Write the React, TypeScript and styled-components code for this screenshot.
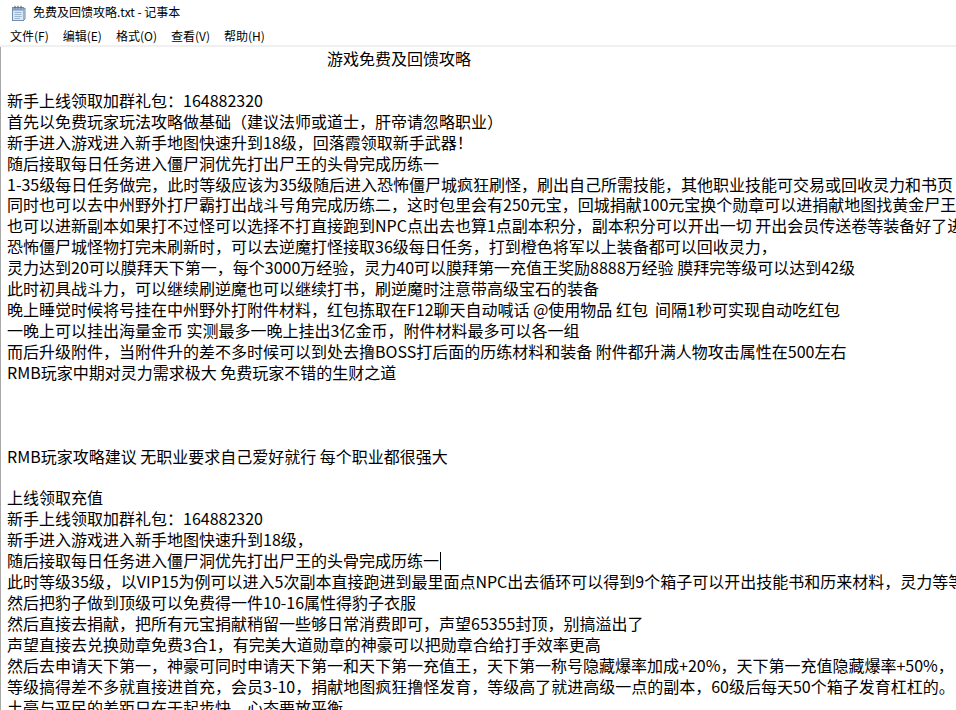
import React from 'react';
import styled, { createGlobalStyle } from 'styled-components';

const GlobalStyle = createGlobalStyle`
  html, body {
    margin: 0;
    padding: 0;
    background: #ffffff;
    overflow: hidden;
  }
  body {
    font-family: "Noto Sans CJK SC", "Noto Sans", sans-serif;
  }
`;

const Window = styled.div`
  width: 956px;
  height: 710px;
  display: flex;
  flex-direction: column;
  background: #ffffff;
  overflow: hidden;
`;

const TitleBar = styled.div`
  height: 25px;
  display: flex;
  align-items: center;
  gap: 7px;
  padding-left: 11px;
  font-size: 12px;
  color: #000;
`;

const TitleText = styled.span`
  line-height: 1;
  margin-top: -1px;
`;

const MenuBar = styled.div`
  height: 20px;
  display: flex;
  align-items: center;
  gap: 14px;
  padding-left: 10px;
  font-size: 12px;
  color: #000;
  border-bottom: 2px solid #f0f0f0;
  margin-bottom: 0;
`;

const MenuItem = styled.span`
  line-height: 1;
  margin-top: 2px;
`;

const Editor = styled.div`
  flex: 1;
  border-left: 1px solid #a8a8a8;
  padding: 1px 0 0 6px;
  overflow: hidden;
  font-size: 16px;
  color: #000;
`;

const Line = styled.div<{ $indent?: number }>`
  height: 20.93px;
  line-height: 20.93px;
  white-space: pre;
  padding-left: ${(p) => p.$indent || 0}px;
`;

const Caret = styled.span`
  display: inline-block;
  width: 1px;
  height: 18px;
  background: #000;
  vertical-align: -3px;
  margin-left: 1px;
`;

const NotepadIcon = () => (
  <svg width="15" height="16" viewBox="0 0 15 16">
    <rect x="1.5" y="2.5" width="11" height="13" fill="#dbe9f6" stroke="#6e8fb3" />
    <rect x="1.5" y="2.5" width="11" height="2.5" fill="#8eb4dc" stroke="#6e8fb3" />
    <line x1="3.5" y1="7.5" x2="10.5" y2="7.5" stroke="#9fb6cf" />
    <line x1="3.5" y1="9.5" x2="10.5" y2="9.5" stroke="#9fb6cf" />
    <line x1="3.5" y1="11.5" x2="10.5" y2="11.5" stroke="#9fb6cf" />
    <line x1="3.5" y1="13.5" x2="9" y2="13.5" stroke="#9fb6cf" />
    <line x1="4" y1="0.8" x2="4" y2="3.5" stroke="#555" />
    <line x1="7" y1="0.8" x2="7" y2="3.5" stroke="#555" />
    <line x1="10" y1="0.8" x2="10" y2="3.5" stroke="#555" />
    <path d="M12.5 4 L14 3 L14 14 L12.5 15.5" fill="#c4d6ea" stroke="#6e8fb3" />
  </svg>
);

const menus = ['文件(F)', '编辑(E)', '格式(O)', '查看(V)', '帮助(H)'];

const lines: string[] = [
  '',
  '新手上线领取加群礼包：164882320',
  '首先以免费玩家玩法攻略做基础（建议法师或道士，肝帝请忽略职业）',
  '新手进入游戏进入新手地图快速升到18级，回落霞领取新手武器！',
  '随后接取每日任务进入僵尸洞优先打出尸王的头骨完成历练一',
  '1-35级每日任务做完，此时等级应该为35级随后进入恐怖僵尸城疯狂刷怪，刷出自己所需技能，其他职业技能可交易或回收灵力和书页',
  '同时也可以去中州野外打尸霸打出战斗号角完成历练二，这时包里会有250元宝，回城捐献100元宝换个勋章可以进捐献地图找黄金尸王打',
  '也可以进新副本如果打不过怪可以选择不打直接跑到NPC点出去也算1点副本积分，副本积分可以开出一切 开出会员传送卷等装备好了进',
  '恐怖僵尸城怪物打完未刷新时，可以去逆魔打怪接取36级每日任务，打到橙色将军以上装备都可以回收灵力，',
  '灵力达到20可以膜拜天下第一，每个3000万经验，灵力40可以膜拜第一充值王奖励8888万经验 膜拜完等级可以达到42级',
  '此时初具战斗力，可以继续刷逆魔也可以继续打书，刷逆魔时注意带高级宝石的装备',
  '晚上睡觉时候将号挂在中州野外打附件材料，红包拣取在F12聊天自动喊话 @使用物品 红包  间隔1秒可实现自动吃红包',
  '一晚上可以挂出海量金币 实测最多一晚上挂出3亿金币，附件材料最多可以各一组',
  '而后升级附件，当附件升的差不多时候可以到处去撸BOSS打后面的历练材料和装备 附件都升满人物攻击属性在500左右',
  'RMB玩家中期对灵力需求极大 免费玩家不错的生财之道',
  '',
  '',
  '',
  'RMB玩家攻略建议 无职业要求自己爱好就行 每个职业都很强大',
  '',
  '上线领取充值',
  '新手上线领取加群礼包：164882320',
  '新手进入游戏进入新手地图快速升到18级，',
];

const tail: string[] = [
  '此时等级35级，以VIP15为例可以进入5次副本直接跑进到最里面点NPC出去循环可以得到9个箱子可以开出技能书和历来材料，灵力等等',
  '然后把豹子做到顶级可以免费得一件10-16属性得豹子衣服',
  '然后直接去捐献，把所有元宝捐献稍留一些够日常消费即可，声望65355封顶，别搞溢出了',
  '声望直接去兑换勋章免费3合1，有完美大道勋章的神豪可以把勋章合给打手效率更高',
  '然后去申请天下第一，神豪可同时申请天下第一和天下第一充值王，天下第一称号隐藏爆率加成+20%，天下第一充值隐藏爆率+50%，',
  '等级搞得差不多就直接进首充，会员3-10，捐献地图疯狂撸怪发育，等级高了就进高级一点的副本，60级后每天50个箱子发育杠杠的。',
  '土豪与平民的差距只在于起步快，心态要放平衡',
];

export default function App() {
  return (
    <>
      <GlobalStyle />
      <Window>
        <TitleBar>
          <NotepadIcon />
          <TitleText>免费及回馈攻略.txt - 记事本</TitleText>
        </TitleBar>
        <MenuBar>
          {menus.map((m) => (
            <MenuItem key={m}>{m}</MenuItem>
          ))}
        </MenuBar>
        <Editor>
          <Line $indent={320}>游戏免费及回馈攻略</Line>
          {lines.map((l, i) => (
            <Line key={i}>{l}</Line>
          ))}
          <Line>
            随后接取每日任务进入僵尸洞优先打出尸王的头骨完成历练一
            <Caret />
          </Line>
          {tail.map((l, i) => (
            <Line key={'t' + i}>{l}</Line>
          ))}
        </Editor>
      </Window>
    </>
  );
}
